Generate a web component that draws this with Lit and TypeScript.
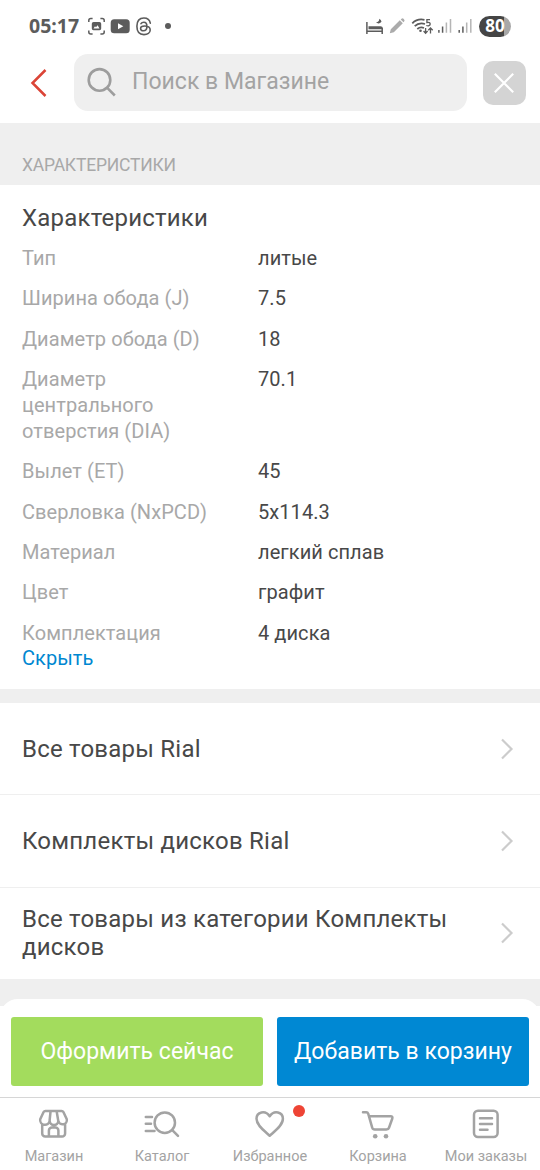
import { LitElement, html, css, svg } from "lit";
import { customElement } from "lit/decorators.js";

const specs: [string, string][] = [
  ["Тип", "литые"],
  ["Ширина обода (J)", "7.5"],
  ["Диаметр обода (D)", "18"],
  ["Диаметр центрального отверстия (DIA)", "70.1"],
  ["Вылет (ET)", "45"],
  ["Сверловка (NxPCD)", "5x114.3"],
  ["Материал", "легкий сплав"],
  ["Цвет", "графит"],
  ["Комплектация", "4 диска"],
];

const links = [
  "Все товары Rial",
  "Комплекты дисков Rial",
  "Все товары из категории Комплекты дисков",
];

const tabs = [
  {
    label: "Магазин",
    icon: svg`<path d="M9.400 5.900H25.600Q26.800 5.900 27.400 7L30.800 14.200a4.300 4.300 0 0 1-8.500 1.600 4.300 4.300 0 0 1-8.600 0A4.300 4.300 0 0 1 4.200 14.200L7.600 7Q8.200 5.900 9.400 5.900Z M14.600 6L13.600 15.500 M20.600 6L22.200 15.500 M6.200 19V28.500a3 3 0 0 0 3 3H26.100a3 3 0 0 0 3-3V19 M12.900 31.500V25.600a3 3 0 0 1 3-3h3.500a3 3 0 0 1 3 3V31.500"/>`,
  },
  {
    label: "Каталог",
    icon: svg`<circle cx="20.800" cy="17.700" r="10.200"/><path d="M28.300 25.200L34 30.900M1.800 12H8M1.800 18.800H7M1.800 26H10.500"/>`,
  },
  {
    label: "Избранное",
    badge: true,
    icon: svg`<path d="M17.700 30.800C12 25.600 4.500 20.300 4.500 13.800C4.500 7.200 13.200 4.600 17.700 11.300C22.200 4.600 30.900 7.200 30.900 13.800C30.900 20.300 23.500 25.600 17.700 30.800Z"/>`,
  },
  {
    label: "Корзина",
    icon: svg`<path d="M3 7.300H6.300Q7.700 7.300 8.200 8.600L12.200 22.700Q12.800 24.600 14.800 24.600H26.300Q28.300 24.600 29 22.700L32.300 13.500Q32.900 11.300 30.600 11.300H9.200"/><circle cx="15.200" cy="31.300" r="2.300" fill="currentColor" stroke="none"/><circle cx="26" cy="31.300" r="2.300" fill="currentColor" stroke="none"/>`,
  },
  {
    label: "Мои заказы",
    icon: svg`<rect x="6" y="5.700" width="23.600" height="26.300" rx="4"/><path d="M12 13.300H24M12 19H24M12 24.800H19.500"/>`,
  },
];

@customElement("status-bar")
class StatusBar extends LitElement {
  static styles = css`
    :host {
      display: flex;
      align-items: center;
      box-sizing: border-box;
      height: 52px;
      padding: 0 29px;
      color: #5c5c5c;
    }
    .time {
      width: 59px;
      font: 700 19.500px/24px "Noto Sans", sans-serif;
    }
    svg {
      display: block;
      flex: none;
      fill: none;
      stroke: currentColor;
    }
    .spacer {
      flex: 1;
    }
    .battery {
      display: grid;
      place-items: center;
      width: 32px;
      height: 21px;
      border-radius: 11px;
      background: linear-gradient(90deg, #454545 79%, #a8a8a8 79%);
      color: #fff;
      font: 700 17px/20px "Noto Sans", sans-serif;
    }
    .battery span {
      margin-top: -1px;
    }
  `;
  render() {
    return html`
      <span class="time">05:17</span>
      <svg width="84" height="24" viewBox="88 14 84 24">
        <path stroke-width="1.500" d="M88.800 22V20.500a2 2 0 0 1 2-2h1.800M100.400 18.500h1.800a2 2 0 0 1 2 2V22M104.200 30.500V32a2 2 0 0 1-2 2h-1.800M92.600 34h-1.800a2 2 0 0 1-2-2v-1.500"/>
        <path fill="currentColor" stroke="none" fill-rule="evenodd" d="M93.500 22H99.500a1.700 1.700 0 0 1 1.700 1.700V28.500a1.700 1.700 0 0 1-1.700 1.700H93.500a1.700 1.700 0 0 1-1.700-1.700V23.700a1.700 1.700 0 0 1 1.700-1.700ZM93.500 28.600H99.500L97.600 25.300 96 27.300 95 26.300Z"/>
        <rect x="110.700" y="19.300" width="19" height="14" rx="3.500" fill="currentColor" stroke="none"/>
        <path fill="#fff" stroke="none" d="M118 23.300V29.300L123.300 26.300Z"/>
        <path stroke-width="1.600" stroke-linecap="round" d="M150.300 23.200C149.700 19.800 147.500 18 143.900 18C139.200 18 136.900 21 136.900 26.300C136.900 31.500 139.200 34.600 143.900 34.600C147.500 34.600 150.200 32.800 150.200 30C150.200 27.100 147.500 26 144.600 26C142 26 140.600 27 140.600 28.500C140.600 29.900 141.800 30.800 143.400 30.800C145.900 30.800 146.900 29.200 146.900 26.500C146.900 23.700 146 22.300 143.900 22.300C142.500 22.300 141.500 22.800 141 23.700"/>
        <circle cx="168" cy="26" r="3" fill="currentColor" stroke="none"/>
      </svg>
      <span class="spacer"></span>
      <svg width="113" height="24" viewBox="366 14 113 24">
        <path stroke-width="1.500" d="M366.900 22V34M366.500 31.200H382.500M382.200 34V28.500"/>
        <path fill="currentColor" stroke="none" d="M371 26.300H380.500a2.500 2.500 0 0 1 2.500 2V29.300H368.500V26.300ZM379.300 18.800A3.400 3.400 0 0 1 376 22.300A3.500 3.500 0 0 0 381.500 21.800A3.800 3.800 0 0 0 379.300 18.800Z"/>
        <path fill="#ababab" stroke="none" d="M389.800 33.200L390.800 29.300L399.800 20.300L402.800 23.200L393.800 32.200ZM400.700 19.500L401.500 18.800a1.400 1.400 0 0 1 2 0L404.100 19.500a1.400 1.400 0 0 1 0 2L403.500 22.300Z"/>
        <path stroke-width="1.800" d="M412.300 23.300C415.500 20 420 18.900 424.500 19.800M414.700 26.200C417.500 23.500 421 22.800 425 24M417.300 29C419.300 27.300 421.700 27 424 28"/>
        <circle cx="420.500" cy="30.800" r="1.300" fill="currentColor" stroke="none"/>
        <path stroke-width="1.300" d="M430 19.700H426.900V22.500C429 22 430.200 22.800 430.200 24.100C430.200 25.700 428.300 26.300 426.300 25.500M425.600 28V33M423.600 31L425.600 33.200L427.600 31M430.500 33.500V28.200M428.300 30.200L430.500 28L432.700 30.200"/>
        <g stroke-width="1.500"><path d="M438.900 30V32.800M442.600 26.500V32.800M459.200 30V32.800M462.900 26.500V32.800"/><path stroke="#b5b5b5" d="M446.400 22.500V32.800M450.500 19V32.800M466.700 22.500V32.800M470.800 19V32.800"/></g>
      </svg>
      <span class="battery"><span>80</span></span>
    `;
  }
}

@customElement("search-header")
class SearchHeader extends LitElement {
  static styles = css`
    :host {
      display: flex;
      align-items: center;
      box-sizing: border-box;
      height: 71px;
      padding: 2px 14.500px 12px 29px;
    }
    svg {
      display: block;
      fill: none;
    }
    .back {
      width: 20px;
      margin-right: 24.500px;
      stroke: #db4437;
      stroke-width: 2.500;
    }
    .field {
      display: flex;
      align-items: center;
      gap: 15px;
      flex: 1;
      box-sizing: border-box;
      height: 57px;
      padding: 0 0 2px 12.500px;
      border-radius: 14px;
      background: #efefef;
      color: #a3a3a3;
      font-size: 23px;
      letter-spacing: 0.020px;
      stroke: #9d9d9d;
      stroke-width: 2.600;
    }
    .close {
      display: grid;
      place-items: center;
      width: 43px;
      height: 44px;
      margin-left: 16px;
      border-radius: 10px;
      background: #d4d4d4;
      stroke: #fff;
      stroke-width: 2.200;
    }
  `;
  render() {
    return html`
      <svg class="back" height="30" viewBox="0 0 20 30"><path d="M16.500 2L3.500 15L16.500 28"/></svg>
      <div class="field">
        <svg width="31" height="32" viewBox="0 0 31 32"><circle cx="13.500" cy="13.900" r="10.800"/><path d="M21 21.700L28.800 29.500"/></svg>
        <span>Поиск в Магазине</span>
      </div>
      <div class="close"><svg width="20" height="20" viewBox="0 0 20 20"><path d="M.8 .8L19.200 19.200M19.200 .8L.8 19.200"/></svg></div>
    `;
  }
}

@customElement("tab-bar")
class TabBar extends LitElement {
  static styles = css`
    :host {
      display: grid;
      grid-template-columns: repeat(5, 1fr);
      box-sizing: border-box;
      height: 73px;
      padding-top: 7px;
      border-top: 1px solid #d6d6d6;
      background: #fff;
      color: #a3a3a3;
    }
    .tab {
      display: flex;
      flex-direction: column;
      align-items: center;
      gap: 6px;
      font-size: 14.500px;
      line-height: 18px;
      white-space: nowrap;
    }
    .icon {
      position: relative;
    }
    svg {
      display: block;
      fill: none;
      stroke: currentColor;
      stroke-width: 2.500;
      stroke-linecap: round;
      stroke-linejoin: round;
    }
    .badge {
      position: absolute;
      left: 41px;
      top: 0;
      width: 12px;
      height: 12px;
      border-radius: 50%;
      background: #ee4435;
    }
  `;
  render() {
    return html`${tabs.map(
      (t) => html`<div class="tab">
        <div class="icon">
          <svg width="36" height="37" viewBox="0 0 36 37">${t.icon}</svg>
          ${t.badge ? html`<i class="badge"></i>` : ""}
        </div>
        <span>${t.label}</span>
      </div>`
    )}`;
  }
}

@customElement("app-root")
class AppRoot extends LitElement {
  static styles = css`
    :host {
      display: flex;
      flex-direction: column;
      height: 1170px;
      overflow: hidden;
      background: #fff;
      color: #484848;
      font-family: Roboto, sans-serif;
    }
    :host > * {
      flex: none;
    }
    .caption {
      box-sizing: border-box;
      height: 62px;
      padding: 32px 22px 0;
      background: #efefef;
      color: #a8a8a8;
      font-size: 17.500px;
      line-height: 20px;
      letter-spacing: -0.200px;
    }
    .specs {
      box-sizing: border-box;
      height: 504px;
      padding: 18px 22px 0;
      font-size: 20px;
      line-height: 26px;
      letter-spacing: 0.070px;
    }
    .title {
      margin: 0 0 12px;
      font-size: 24px;
      line-height: 30px;
      font-weight: 400;
      letter-spacing: 0.220px;
    }
    .grid {
      display: grid;
      grid-template-columns: 190px 1fr;
      column-gap: 46px;
      row-gap: 14.350px;
    }
    .name {
      color: #a8a8a8;
    }
    .toggle {
      color: #0087d1;
      line-height: 25px;
    }
    .divider {
      height: 14px;
      background: #efefef;
    }
    .link {
      display: flex;
      align-items: center;
      justify-content: space-between;
      box-sizing: border-box;
      height: 92.330px;
      padding: 0 26px 0 22px;
      border-bottom: 1px solid #efefef;
      font-size: 24px;
      line-height: 28px;
      letter-spacing: 0.230px;
    }
    .label {
      width: 440px;
    }
    .chevron {
      fill: none;
      stroke: #ccc;
      stroke-width: 2.200;
    }
    .peek {
      height: 26px;
      padding-top: 19px;
      box-sizing: border-box;
      background: #efefef;
      overflow: hidden;
    }
    .sheet {
      height: 40px;
      border-radius: 18px;
      background: #fff;
    }
    .actions {
      display: grid;
      grid-template-columns: 1fr 1fr;
      gap: 14px;
      box-sizing: border-box;
      height: 91px;
      padding: 11.500px 11px 11px;
    }
    .button {
      display: grid;
      place-items: center;
      padding-bottom: 1px;
      border-radius: 3px;
      color: #fff;
      font-size: 23px;
      letter-spacing: 0.030px;
    }
    .order {
      background: #a3dc5d;
    }
    .cart {
      background: #0088d3;
    }
  `;
  render() {
    return html`
      <status-bar></status-bar>
      <search-header></search-header>
      <div class="caption">ХАРАКТЕРИСТИКИ</div>
      <section class="specs">
        <h2 class="title">Характеристики</h2>
        <div class="grid">
          ${specs.map(([n, v]) => html`<span class="name">${n}</span><span>${v}</span>`)}
        </div>
        <div class="toggle">Скрыть</div>
      </section>
      <div class="divider"></div>
      ${links.map(
        (l) => html`<div class="link">
          <span class="label">${l}</span>
          <svg class="chevron" width="14" height="22" viewBox="0 0 14 22"><path d="M2 1.500L11.500 11L2 20.500"/></svg>
        </div>`
      )}
      <div class="peek"><div class="sheet"></div></div>
      <div class="actions">
        <div class="button order">Оформить сейчас</div>
        <div class="button cart">Добавить в корзину</div>
      </div>
      <tab-bar></tab-bar>
    `;
  }
}
